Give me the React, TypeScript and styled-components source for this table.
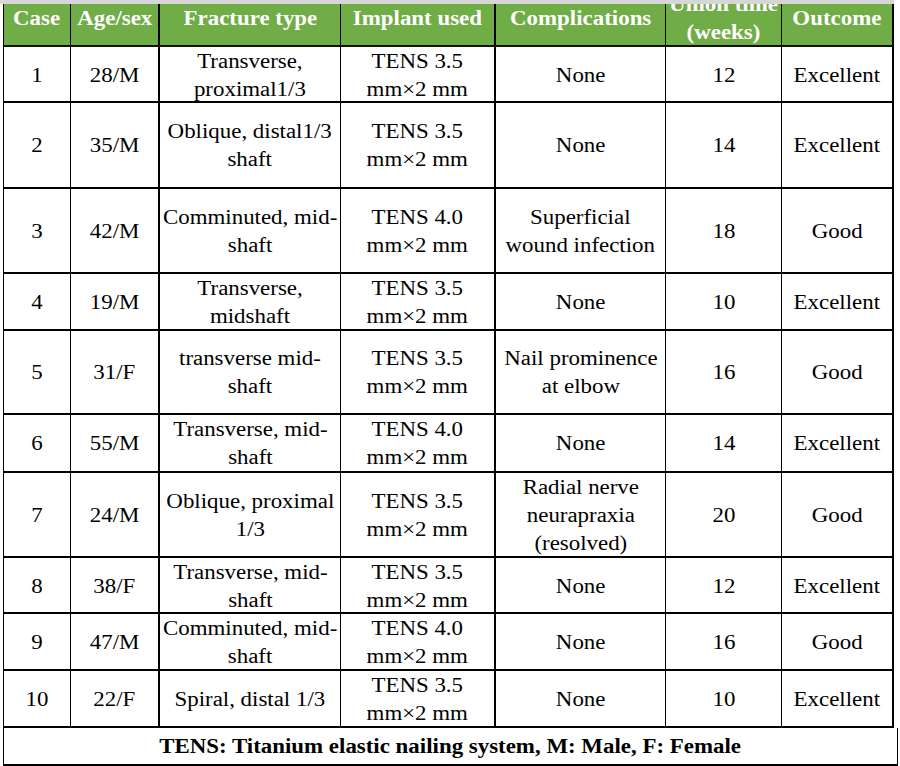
import styled, { createGlobalStyle } from 'styled-components'

type Row = {
  id: string
  age: string
  fracture: string[]
  implant: string
  complications: string[]
  union: string
  outcome: string
  height: number
}

const rows: Row[] = [
  { id: '1', age: '28/M', fracture: ['Transverse,', 'proximal1/3'], implant: '3.5', complications: ['None'], union: '12', outcome: 'Excellent', height: 56 },
  { id: '2', age: '35/M', fracture: ['Oblique, distal1/3', 'shaft'], implant: '3.5', complications: ['None'], union: '14', outcome: 'Excellent', height: 86 },
  { id: '3', age: '42/M', fracture: ['Comminuted, mid-', 'shaft'], implant: '4.0', complications: ['Superficial', 'wound infection'], union: '18', outcome: 'Good', height: 85 },
  { id: '4', age: '19/M', fracture: ['Transverse,', 'midshaft'], implant: '3.5', complications: ['None'], union: '10', outcome: 'Excellent', height: 57 },
  { id: '5', age: '31/F', fracture: ['transverse mid-', 'shaft'], implant: '3.5', complications: ['Nail prominence', 'at elbow'], union: '16', outcome: 'Good', height: 84 },
  { id: '6', age: '55/M', fracture: ['Transverse, mid-', 'shaft'], implant: '4.0', complications: ['None'], union: '14', outcome: 'Excellent', height: 58 },
  { id: '7', age: '24/M', fracture: ['Oblique, proximal', '1/3'], implant: '3.5', complications: ['Radial nerve', 'neurapraxia', '(resolved)'], union: '20', outcome: 'Good', height: 85 },
  { id: '8', age: '38/F', fracture: ['Transverse, mid-', 'shaft'], implant: '3.5', complications: ['None'], union: '12', outcome: 'Excellent', height: 56 },
  { id: '9', age: '47/M', fracture: ['Comminuted, mid-', 'shaft'], implant: '4.0', complications: ['None'], union: '16', outcome: 'Good', height: 57 },
  { id: '10', age: '22/F', fracture: ['Spiral, distal 1/3'], implant: '3.5', complications: ['None'], union: '10', outcome: 'Excellent', height: 57 },
]

const headers = [['Case'], ['Age/sex'], ['Fracture type'], ['Implant used'], ['Complications'], ['Union time', '(weeks)'], ['Outcome']]

// column right borders: thicker ones match the source document
const thick = [false, true, false, true, false, false, true]

const serif = '"Liberation Serif", "Times New Roman", serif'

function Lines({ lines }: { lines: string[] }) {
  return (
    <Text>
      {lines.map((l, i) => (
        <span key={i}>
          {i > 0 && <br />}
          {l}
        </span>
      ))}
    </Text>
  )
}

export default function App() {
  return (
    <>
      <GlobalStyle />
      <Strip />
      <Table>
        <HeadRow>
          {headers.map((h, i) => (
            <HeadCell key={i} $thick={thick[i]}>
              <Lines lines={h} />
            </HeadCell>
          ))}
        </HeadRow>
        {rows.map(r => {
          const cells = [[r.id], [r.age], r.fracture, ['TENS ' + r.implant, 'mm×2 mm'], r.complications, [r.union], [r.outcome]]
          return (
            <BodyRow key={r.id} $height={r.height}>
              {cells.map((c, i) => (
                <Cell key={i} $thick={thick[i]}>
                  <Lines lines={c} />
                </Cell>
              ))}
            </BodyRow>
          )
        })}
        <Footer>
          <Text>TENS: Titanium elastic nailing system, M: Male, F: Female</Text>
        </Footer>
      </Table>
    </>
  )
}

const GlobalStyle = createGlobalStyle`
  body {
    margin: 0;
    background: #fff;
    font-family: ${serif};
    color: #000;
    overflow: hidden;
  }
`

const Strip = styled.div`
  width: 894px;
  height: 4px;
  background: #d6d6d6;
`

const Table = styled.div`
  margin-left: 3px;
  width: 891px;
  border-left: 1px solid #000;
  box-sizing: border-box;
`

const columns = '67px 89px 181px 155px 170px 116px 112px'

const HeadRow = styled.div`
  display: grid;
  grid-template-columns: ${columns};
  height: 43px;
  background: #70ad47;
  border-bottom: 2px solid #111;
  box-sizing: border-box;
`

const BodyRow = styled.div<{ $height: number }>`
  display: grid;
  grid-template-columns: ${columns};
  height: ${p => p.$height}px;
  border-bottom: 2px solid #000;
  box-sizing: border-box;
`

const Cell = styled.div<{ $thick: boolean }>`
  display: flex;
  align-items: center;
  justify-content: center;
  text-align: center;
  border-right: ${p => (p.$thick ? 2 : 1)}px solid #000;
  font-size: 20px;
  line-height: 28px;
  white-space: nowrap;
  box-sizing: border-box;
`

const HeadCell = styled(Cell)`
  color: #fff;
  font-weight: 700;
  padding-bottom: 13px;
  overflow: hidden;
`

const Text = styled.span`
  display: inline-block;
  transform: scaleX(1.145);
`

const Footer = styled.div`
  display: flex;
  align-items: center;
  justify-content: center;
  width: 894px;
  height: 38px;
  border-right: 1px solid #000;
  border-bottom: 2px solid #000;
  box-sizing: border-box;
  font-size: 20px;
  font-weight: 700;
  white-space: nowrap;
`
